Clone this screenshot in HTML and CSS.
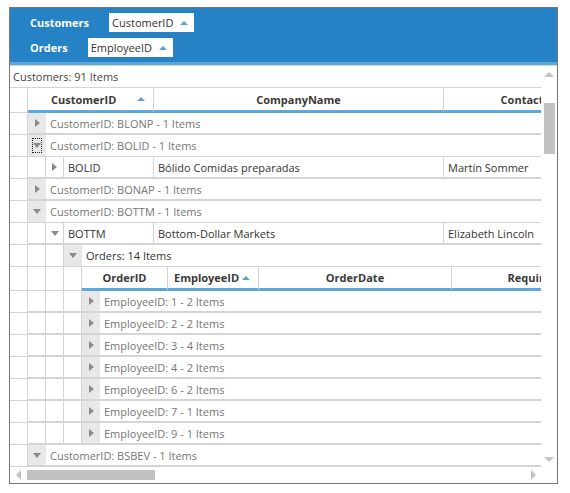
FILE: index.html
```html
<!DOCTYPE html>
<html lang="en">
<head>
  <meta charset="UTF-8">
  <title>Customers Grid</title>
  <link rel="stylesheet" href="styles.css">
</head>
<body>

  <div class="grid">

    <!-- Group drop area -->
    <div class="group-drop">
      <div class="drop-line">
        <span class="drop-label">Customers</span>
        <span class="sort-chip">CustomerID <i class="sort-up"></i></span>
      </div>
      <div class="drop-line">
        <span class="drop-label">Orders</span>
        <span class="sort-chip">EmployeeID <i class="sort-up"></i></span>
      </div>
    </div>

    <div class="grid-body">
      <div class="grid-main">
        <div class="items-caption">Customers: 91 Items</div>

        <div class="rows">
          <!-- column headers -->
          <div class="row head-row">
            <div class="rh"></div>
            <div class="hcell col-cust">CustomerID <i class="sort-up"></i></div>
            <div class="hcell col-company center">CompanyName</div>
            <div class="hcell col-contact center">ContactName</div>
          </div>

          <div class="row end">
            <div class="rh"></div>
            <div class="expander"><i class="tri-right"></i></div>
            <div class="cell caption">CustomerID: BLONP - 1 Items</div>
          </div>

          <div class="row">
            <div class="rh"></div>
            <div class="expander"><span class="focus"><i class="tri-down"></i></span></div>
            <div class="cell caption">CustomerID: BOLID - 1 Items</div>
          </div>
          <div class="row end">
            <div class="rh"></div>
            <div class="indent"></div>
            <div class="indent"><i class="tri-right"></i></div>
            <div class="cell col-id">BOLID</div>
            <div class="cell col-company">Bólido Comidas preparadas</div>
            <div class="cell col-contact">Martín Sommer</div>
          </div>

          <div class="row end">
            <div class="rh"></div>
            <div class="expander"><i class="tri-right"></i></div>
            <div class="cell caption">CustomerID: BONAP - 1 Items</div>
          </div>

          <div class="row">
            <div class="rh"></div>
            <div class="expander"><i class="tri-down"></i></div>
            <div class="cell caption">CustomerID: BOTTM - 1 Items</div>
          </div>
          <div class="row end">
            <div class="rh"></div>
            <div class="indent"></div>
            <div class="indent"><i class="tri-down"></i></div>
            <div class="cell col-id">BOTTM</div>
            <div class="cell col-company">Bottom-Dollar Markets</div>
            <div class="cell col-contact">Elizabeth Lincoln</div>
          </div>

          <!-- nested orders -->
          <div class="row">
            <div class="rh"></div>
            <div class="indent"></div>
            <div class="indent"></div>
            <div class="expander"><i class="tri-down"></i></div>
            <div class="cell detail-title">Orders: 14 Items</div>
          </div>
          <div class="row head-row inner">
            <div class="rh"></div>
            <div class="indent"></div>
            <div class="indent"></div>
            <div class="indent"></div>
            <div class="hcell col-order center">OrderID</div>
            <div class="hcell col-emp">EmployeeID <i class="sort-up"></i></div>
            <div class="hcell col-date center">OrderDate</div>
            <div class="hcell col-req center">RequiredDate</div>
          </div>

          <div class="row end">
            <div class="rh"></div><div class="indent"></div><div class="indent"></div><div class="indent"></div>
            <div class="expander"><i class="tri-right"></i></div>
            <div class="cell caption">EmployeeID: 1 - 2 Items</div>
          </div>
          <div class="row end">
            <div class="rh"></div><div class="indent"></div><div class="indent"></div><div class="indent"></div>
            <div class="expander"><i class="tri-right"></i></div>
            <div class="cell caption">EmployeeID: 2 - 2 Items</div>
          </div>
          <div class="row end">
            <div class="rh"></div><div class="indent"></div><div class="indent"></div><div class="indent"></div>
            <div class="expander"><i class="tri-right"></i></div>
            <div class="cell caption">EmployeeID: 3 - 4 Items</div>
          </div>
          <div class="row end">
            <div class="rh"></div><div class="indent"></div><div class="indent"></div><div class="indent"></div>
            <div class="expander"><i class="tri-right"></i></div>
            <div class="cell caption">EmployeeID: 4 - 2 Items</div>
          </div>
          <div class="row end">
            <div class="rh"></div><div class="indent"></div><div class="indent"></div><div class="indent"></div>
            <div class="expander"><i class="tri-right"></i></div>
            <div class="cell caption">EmployeeID: 6 - 2 Items</div>
          </div>
          <div class="row end">
            <div class="rh"></div><div class="indent"></div><div class="indent"></div><div class="indent"></div>
            <div class="expander"><i class="tri-right"></i></div>
            <div class="cell caption">EmployeeID: 7 - 1 Items</div>
          </div>
          <div class="row end">
            <div class="rh"></div><div class="indent"></div><div class="indent"></div><div class="indent"></div>
            <div class="expander"><i class="tri-right"></i></div>
            <div class="cell caption">EmployeeID: 9 - 1 Items</div>
          </div>

          <div class="row end">
            <div class="rh"></div>
            <div class="expander"><i class="tri-down"></i></div>
            <div class="cell caption">CustomerID: BSBEV - 1 Items</div>
          </div>
        </div>

        <!-- horizontal scrollbar -->
        <div class="hscroll">
          <div class="sb-btn"><i class="arr-left"></i></div>
          <div class="hthumb"></div>
          <div class="sb-fill"></div>
          <div class="sb-btn"><i class="arr-right"></i></div>
        </div>
      </div>

      <!-- vertical scrollbar -->
      <div class="vscroll-col">
        <div class="vscroll">
          <div class="sb-btn"><i class="arr-up"></i></div>
          <div class="vthumb"></div>
          <div class="sb-fill"></div>
          <div class="sb-btn"><i class="arr-down"></i></div>
        </div>
        <div class="sb-corner"></div>
      </div>
    </div>
  </div>

</body>
</html>
```

FILE: styles.css
```css
* {
  margin: 0;
  padding: 0;
  box-sizing: border-box;
}
body {
  font-family: 'Open Sans', 'Noto Sans', sans-serif;
  font-size: 11px;
  color: #333;
  background-color: #fff;
}
i {
  display: block;
}

.grid {
  margin: 7px 0 0 9px;
  width: 549px;
  height: 477px;
  border: 1px solid #767676;
  background-color: #fff;
  display: flex;
  flex-direction: column;
}

/* Group drop area */
.group-drop {
  height: 57px;
  background-color: #2482c5;
  border-bottom: 3px solid #5aa8dc;
  padding: 5px 0 0 20px;
}
.drop-line {
  display: flex;
  align-items: center;
  height: 19px;
  margin-bottom: 6px;
}
.drop-label {
  color: #fff;
  font-weight: bold;
  margin-right: 20px;
}
.sort-chip {
  display: flex;
  align-items: center;
  gap: 7px;
  height: 19px;
  padding: 0 6px 0 3px;
  background-color: #fff;
  color: #333;
}
.sort-up {
  width: 0;
  height: 0;
  border-left: 4px solid transparent;
  border-right: 4px solid transparent;
  border-bottom: 4px solid #5b9fd5;
}

.grid-body {
  flex: 1;
  display: flex;
  border-top: 1px solid #d6d6d6;
  min-height: 0;
}
.grid-main {
  width: 531px;
  display: flex;
  flex-direction: column;
}
.items-caption {
  height: 22px;
  line-height: 21px;
  padding-left: 3px;
  border-bottom: 1px solid #d4d4d4;
  color: #444;
}
.rows {
  flex: 1;
  overflow: hidden;
}

/* rows and cells */
.row {
  display: flex;
  height: 22px;
  white-space: nowrap;
}
.row > div {
  flex: none;
  border-bottom: 1px solid #d4d4d4;
  display: flex;
  align-items: center;
}
.row.end > div {
  border-bottom-width: 2px;
}
.row.end > .rh {
  border-bottom-width: 1px;
}
.rh {
  width: 18px;
  border-right: 1px solid #d4d4d4;
}
.indent {
  width: 18px;
  border-right: 1px solid #d4d4d4;
  justify-content: center;
}
.expander {
  width: 18px;
  background-color: #e8e8e8;
  justify-content: center;
}
.cell {
  padding: 0 4px;
  border-right: 1px solid #d4d4d4;
  overflow: hidden;
}
.caption {
  flex: 1 !important;
  border-right: none !important;
  color: #767676;
}
.detail-title {
  flex: 1 !important;
  border-right: none !important;
  color: #333;
}

.col-id { width: 90px; }
.col-company { width: 290px; }
.col-contact { width: 190px; }

/* header rows */
.head-row {
  height: 25px;
}
.head-row > .hcell {
  border-bottom: 3px solid #5aa8dc;
  border-right: 1px solid #d4d4d4;
  font-weight: bold;
  color: #3a3a3a;
  padding: 0 6px;
  justify-content: space-between;
}
.head-row > .center {
  justify-content: center;
}
.hcell .sort-up {
  margin-right: 2px;
}
.col-cust {
  width: 126px;
  padding-left: 23px !important;
}
.head-row.inner {
  height: 24px;
}
.col-order { width: 86px; }
.col-emp { width: 91px; }
.col-date { width: 193px; }
.col-req { width: 188px; }

/* triangles */
.tri-right {
  width: 0;
  height: 0;
  border-top: 4px solid transparent;
  border-bottom: 4px solid transparent;
  border-left: 5px solid #8a8a8a;
}
.tri-down {
  width: 0;
  height: 0;
  border-left: 4px solid transparent;
  border-right: 4px solid transparent;
  border-top: 5px solid #8a8a8a;
}
.focus {
  border: 1px dotted #222;
  padding: 4px 0;
  width: 10px;
  display: flex;
  justify-content: center;
}

/* scrollbars */
.hscroll {
  height: 16px;
  display: flex;
  align-items: center;
}
.sb-btn {
  width: 16px;
  height: 16px;
  display: flex;
  align-items: center;
  justify-content: center;
  flex: none;
}
.sb-fill {
  flex: 1;
}
.hthumb {
  width: 128px;
  height: 10px;
  margin-left: 1px;
  background-color: #c2c2c2;
}
.vscroll-col {
  width: 16px;
  display: flex;
  flex-direction: column;
}
.vscroll {
  flex: 1;
  display: flex;
  flex-direction: column;
  align-items: center;
}
.vthumb {
  width: 11px;
  height: 51px;
  margin-top: 21px;
  background-color: #c2c2c2;
}
.sb-corner {
  height: 16px;
}
.arr-up {
  border-left: 5px solid transparent;
  border-right: 5px solid transparent;
  border-bottom: 5px solid #c4c4c4;
}
.arr-down {
  border-left: 5px solid transparent;
  border-right: 5px solid transparent;
  border-top: 5px solid #c4c4c4;
}
.arr-left {
  border-top: 5px solid transparent;
  border-bottom: 5px solid transparent;
  border-right: 5px solid #c4c4c4;
}
.arr-right {
  border-top: 5px solid transparent;
  border-bottom: 5px solid transparent;
  border-left: 5px solid #c4c4c4;
}
```
